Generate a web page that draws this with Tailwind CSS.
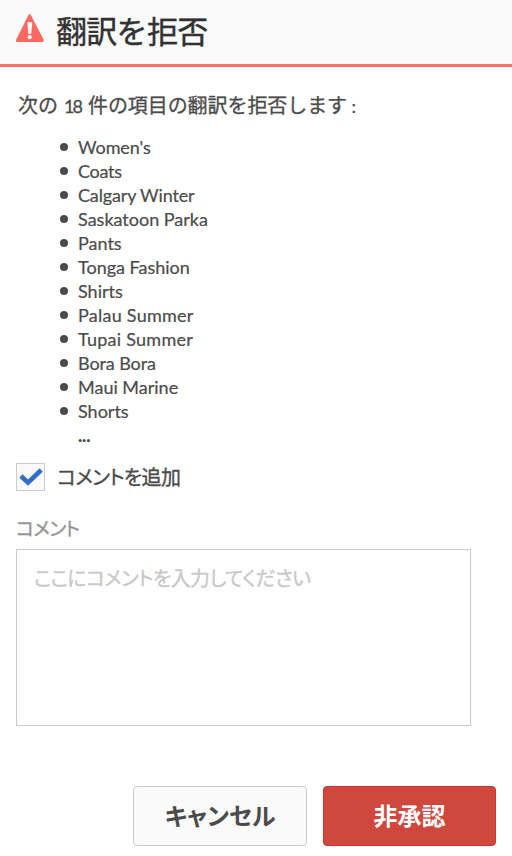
<!DOCTYPE html>
<html lang="ja">
<head>
<meta charset="utf-8">
<title>翻訳を拒否</title>
<script src="https://cdn.jsdelivr.net/npm/@tailwindcss/browser@4"></script>
</head>
<body class="bg-white">
<main class="flex h-[856px] w-[512px] flex-col overflow-hidden bg-white font-['Lato','Noto_Sans_CJK_JP',sans-serif] text-[#4b4b4b]">
  <header class="flex h-[67px] shrink-0 border-b-[3px] border-[#fd7067] bg-[#fafafa] pl-[15px]">
    <svg class="mt-[13px] h-[30px] w-[30px] shrink-0" viewBox="0 0 30 30"><path d="M13.4 2.2Q14.7 0 16 2.2L28.6 26.5Q29.3 29 27 29H2.7Q.2 29 1.2 26.5Z" fill="#fd6861"/><path d="M12.3 9.5q2.5-1.2 5 0L16.2 21h-2.8z" fill="#fafafa"/><circle cx="14.8" cy="24.2" r="2.1" fill="#fafafa"/></svg>
    <h1 class="ml-[11px] mt-[11px] text-[31px] leading-[40px] tracking-[-0.7px] whitespace-nowrap text-[#323232] [-webkit-text-stroke:0.4px_#323232]">翻訳を拒否</h1>
  </header>
  <p class="ml-[18px] mt-[23px] h-[30px] shrink-0 text-[20px] leading-[30px] tracking-[-0.08px] whitespace-nowrap [-webkit-text-stroke:0.3px_#4b4b4b]">次の <span class="ml-[1px] text-[18px] tracking-[-1.9px]">18</span><span class="ml-[2px]"> 件の項目の翻訳を拒否します</span><span class="text-[18px]"> :</span></p>
  <ul class="ml-[60px] mt-[15px] shrink-0 text-[18px] leading-[24px] [-webkit-text-stroke:0.2px_#4b4b4b]">
    <li class="flex h-6 items-center gap-[10px]"><i class="size-2 rounded-full bg-[#4b4b4b]"></i><span class="tracking-[-0.1px]">Women's</span></li>
    <li class="flex h-6 items-center gap-[10px]"><i class="size-2 rounded-full bg-[#4b4b4b]"></i><span class="tracking-[-0.3px]">Coats</span></li>
    <li class="flex h-6 items-center gap-[10px]"><i class="size-2 rounded-full bg-[#4b4b4b]"></i><span class="tracking-[-0.15px]">Calgary Winter</span></li>
    <li class="flex h-6 items-center gap-[10px]"><i class="size-2 rounded-full bg-[#4b4b4b]"></i><span>Saskatoon Parka</span></li>
    <li class="flex h-6 items-center gap-[10px]"><i class="size-2 rounded-full bg-[#4b4b4b]"></i><span>Pants</span></li>
    <li class="flex h-6 items-center gap-[10px]"><i class="size-2 rounded-full bg-[#4b4b4b]"></i><span>Tonga Fashion</span></li>
    <li class="flex h-6 items-center gap-[10px]"><i class="size-2 rounded-full bg-[#4b4b4b]"></i><span>Shirts</span></li>
    <li class="flex h-6 items-center gap-[10px]"><i class="size-2 rounded-full bg-[#4b4b4b]"></i><span class="tracking-[0.25px]">Palau Summer</span></li>
    <li class="flex h-6 items-center gap-[10px]"><i class="size-2 rounded-full bg-[#4b4b4b]"></i><span class="tracking-[0.25px]">Tupai Summer</span></li>
    <li class="flex h-6 items-center gap-[10px]"><i class="size-2 rounded-full bg-[#4b4b4b]"></i><span class="tracking-[-0.1px]">Bora Bora</span></li>
    <li class="flex h-6 items-center gap-[10px]"><i class="size-2 rounded-full bg-[#4b4b4b]"></i><span>Maui Marine</span></li>
    <li class="flex h-6 items-center gap-[10px]"><i class="size-2 rounded-full bg-[#4b4b4b]"></i><span>Shorts</span></li>
    <li class="h-6 pl-[18px] font-bold tracking-[-0.2px]">...</li>
  </ul>
  <label class="ml-4 mt-4 flex h-7 shrink-0 items-center gap-3">
    <span class="flex h-7 w-[29px] items-center justify-center border border-[#cccccc] bg-[#fafafa]"><svg class="h-[18px] w-[24px]" viewBox="0 0 24 18"><path d="m1.9 8 7.1 6.6L22.2 2" fill="none" stroke="#326ec8" stroke-width="4.6"/></svg></span>
    <span class="text-[20px] leading-7 tracking-[-0.7px] whitespace-nowrap [-webkit-text-stroke:0.35px_#4b4b4b] [font-feature-settings:'palt']">コメントを追加</span>
  </label>
  <p class="ml-4 mt-[23px] h-[30px] shrink-0 text-[19px] leading-[30px] tracking-[-0.7px] whitespace-nowrap text-[#969696] [-webkit-text-stroke:0.35px_#969696] [font-feature-settings:'palt']">コメント</p>
  <div class="ml-4 mt-[5px] h-[177px] w-[455px] shrink-0 border border-[#cccccc] pl-[17px] pt-[13px] text-[20px] leading-[30px] tracking-[-0.65px] whitespace-nowrap text-[#c8c8c8] [-webkit-text-stroke:0.3px_#c8c8c8] [font-feature-settings:'palt']"><span>ここにコメントを入力してください</span></div>
  <footer class="mt-[60px] flex h-[60px] shrink-0 justify-end gap-4 pr-4">
    <button class="flex h-[60px] w-[174px] items-center justify-center rounded-[4px] border border-[#cccccc] bg-[#fafafa] text-[24px] font-bold [font-feature-settings:'palt']"><span>キャンセル</span></button>
    <button class="flex h-[60px] w-[173px] items-center justify-center rounded-[4px] border border-[#bf3b34] bg-[#d0473d] text-[24px] font-bold text-white"><span>非承認</span></button>
  </footer>
</main>
</body>
</html>
